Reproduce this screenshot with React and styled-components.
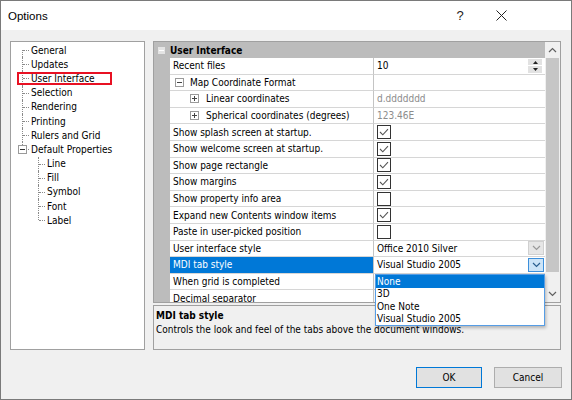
import React from "react";
import styled, { createGlobalStyle } from "styled-components";

const GlobalStyle = createGlobalStyle`
  html, body {
    margin: 0;
    padding: 0;
  }
  body {
    width: 572px;
    height: 400px;
    overflow: hidden;
    font-family: "DejaVu Sans Condensed", "DejaVu Sans", sans-serif;
    font-size: 10px;
    color: #000;
  }
`;

const Window = styled.div`
  width: 572px;
  height: 400px;
  box-sizing: border-box;
  border: 1px solid #7a7a7a;
  background: #f0f0f0;
  display: flex;
  flex-direction: column;
`;

const TitleBar = styled.div`
  height: 29px;
  flex-shrink: 0;
  background: #fff;
  display: flex;
  align-items: center;
  padding-left: 7px;
  font-family: "Liberation Sans", Arial, sans-serif;
  font-size: 11.5px;
`;

const TitleText = styled.div`
  flex: 1;
`;

const TitleButton = styled.div`
  width: ${(p) => p.w}px;
  height: 29px;
  display: flex;
  align-items: center;
  justify-content: center;
  font-size: 13px;
  color: #222;
`;

const Body = styled.div`
  display: flex;
  padding: 11px 10px 0 9px;
`;

const TreePanel = styled.div`
  width: 135px;
  height: 309px;
  box-sizing: border-box;
  border: 1px solid #a0a0a0;
  background: #fff;
  padding-top: 1px;
`;

const TreeRow = styled.div`
  position: relative;
  display: flex;
  align-items: center;
  height: 14.2px;
  padding-left: ${(p) => p.level * 16}px;
  white-space: nowrap;

  ${(p) =>
    p.marked &&
    `
    &::after {
      content: "";
      position: absolute;
      left: 6px;
      top: 1px;
      width: 95px;
      height: 13px;
      box-sizing: border-box;
      border: 2px solid #e81123;
    }
  `}
`;

const Guide = styled.span`
  position: relative;
  width: 18px;
  height: 14.2px;
  flex-shrink: 0;

  &::before {
    content: "";
    position: absolute;
    left: 11px;
    top: ${(p) => (p.first ? 7 : 0)}px;
    height: ${(p) => (p.first || p.last ? 7 : 14.2)}px;
    border-left: 1px dotted #8a8a8a;
  }
  &::after {
    content: "";
    position: absolute;
    left: 12px;
    top: 7px;
    width: 6px;
    border-top: 1px dotted #8a8a8a;
  }
`;

const TreeBox = styled.span`
  position: absolute;
  left: 7px;
  top: 3px;
  width: 9px;
  height: 9px;
  box-sizing: border-box;
  border: 1px solid #9a9a9a;
  background: #fff;
  z-index: 1;

  &::before {
    content: "";
    position: absolute;
    left: 1px;
    top: 3px;
    width: 5px;
    border-top: 1px solid #333;
  }
`;

const TreeLabel = styled.span`
  margin-left: 2px;
`;

const RightColumn = styled.div`
  position: relative;
  margin-left: 8px;
  width: 408px;
  display: flex;
  flex-direction: column;
  gap: 2px;
`;

const Grid = styled.div`
  height: 262px;
  box-sizing: border-box;
  border: 1px solid #a0a0a0;
  display: flex;
  background: #fff;
`;

const RowsArea = styled.div`
  flex: 1;
  overflow: hidden;
  display: flex;
  flex-direction: column;
`;

const CategoryRow = styled.div`
  height: 16px;
  flex-shrink: 0;
  display: flex;
  align-items: center;
  background: #bcbcbc;
  font-weight: bold;
`;

const CategoryToggle = styled.span`
  position: relative;
  width: 7px;
  height: 7px;
  margin: 0 5px 0 4px;
  background: #e4e4e4;

  &::before {
    content: "";
    position: absolute;
    left: 1px;
    top: 3px;
    width: 5px;
    border-top: 1px solid #fff;
  }
`;

const Row = styled.div`
  height: 16.6px;
  flex-shrink: 0;
  display: flex;
`;

const Margin = styled.div`
  width: 16px;
  flex-shrink: 0;
  background: #bcbcbc;
`;

const NameCell = styled.div`
  width: 203px;
  flex-shrink: 0;
  box-sizing: border-box;
  display: flex;
  align-items: center;
  padding-left: ${(p) => [3, 5, 20][p.indent || 0]}px;
  border-bottom: 1px solid #d6d6d6;
  background: ${(p) => (p.selected ? "#0078d7" : "#fff")};
  color: ${(p) => (p.selected ? "#fff" : "#000")};
  white-space: nowrap;
  overflow: hidden;
`;

const Expander = styled.span`
  position: relative;
  width: 9px;
  height: 9px;
  box-sizing: border-box;
  border: 1px solid #9a9a9a;
  margin-right: ${(p) => (p.plus ? 7 : 6)}px;
  flex-shrink: 0;

  &::before {
    content: "";
    position: absolute;
    left: 1px;
    top: 3px;
    width: 5px;
    border-top: 1px solid #444;
  }
  ${(p) =>
    p.plus &&
    `
    &::after {
      content: "";
      position: absolute;
      left: 3px;
      top: 1px;
      height: 5px;
      border-left: 1px solid #444;
    }
  `}
`;

const ValueCell = styled.div`
  flex: 1;
  min-width: 0;
  box-sizing: border-box;
  display: flex;
  align-items: center;
  justify-content: space-between;
  padding-left: 3px;
  padding-right: 1px;
  border-left: 1px solid #c4c4c4;
  border-bottom: 1px solid #d6d6d6;
  color: ${(p) => (p.muted ? "#8c8c8c" : "#000")};
  white-space: nowrap;
`;

const CheckBox = styled.span`
  width: 14px;
  height: 14px;
  box-sizing: border-box;
  border: 1px solid #333;
  background: #fff;
  display: flex;
  align-items: center;
  justify-content: center;
`;

const Spin = styled.span`
  width: 14px;
  height: 14px;
  margin-right: 2px;
  display: flex;
  flex-direction: column;
  gap: 1px;
`;

const SpinHalf = styled.span`
  flex: 1;
  background: #e2e2e2;
  display: flex;
  align-items: center;
  justify-content: center;
`;

const ComboButton = styled.span`
  width: 16px;
  height: 14px;
  box-sizing: border-box;
  border: 1px solid ${(p) => (p.active ? "#3c8fdb" : "#d0d0d0")};
  background: ${(p) => (p.active ? "#cce4f7" : "#e6e6e6")};
  display: flex;
  align-items: center;
  justify-content: center;
`;

const ScrollBar = styled.div`
  width: 15px;
  flex-shrink: 0;
  background: #f0f0f0;
  display: flex;
  flex-direction: column;
  align-items: center;
`;

const ScrollArrow = styled.div`
  height: ${(p) => p.h}px;
  width: 100%;
  display: flex;
  align-items: center;
  justify-content: center;
  flex-shrink: 0;
`;

const Thumb = styled.div`
  width: 13px;
  height: 214px;
  background: #c6c6c6;
  flex-shrink: 0;
`;

const Track = styled.div`
  flex: 1;
`;

const Description = styled.div`
  height: 45px;
  box-sizing: border-box;
  border: 1px solid #a0a0a0;
  padding: 4px 2px;
  display: flex;
  flex-direction: column;
  gap: 3px;
`;

const DescTitle = styled.div`
  font-weight: bold;
`;

const DropList = styled.div`
  position: absolute;
  left: 222px;
  top: 233px;
  width: 170px;
  box-sizing: border-box;
  border: 1px solid #569de5;
  background: #fff;
  box-shadow: 1px 2px 3px rgba(0, 0, 0, 0.25);
  z-index: 2;
`;

const DropItem = styled.div`
  height: 12.5px;
  display: flex;
  align-items: center;
  padding-left: 1px;
  background: ${(p) => (p.highlighted ? "#0078d7" : "#fff")};
  color: ${(p) => (p.highlighted ? "#fff" : "#000")};
`;

const Footer = styled.div`
  display: flex;
  justify-content: flex-end;
  gap: 12px;
  margin-top: 17px;
  padding-right: 9px;
`;

const Button = styled.button`
  width: ${(p) => p.w}px;
  height: 21px;
  box-sizing: border-box;
  border: 1px solid ${(p) => (p.primary ? "#0078d7" : "#adadad")};
  background: #e1e1e1;
  font-family: "DejaVu Sans Condensed", "DejaVu Sans", sans-serif;
  font-size: 10px;
  color: #000;
  padding: 0;
`;

const Chevron = ({ color = "#555", up }) => (
  <svg width="9" height="6" viewBox="0 0 9 6">
    <polyline
      points={up ? "1,5 4.5,1.5 8,5" : "1,1 4.5,4.5 8,1"}
      fill="none"
      stroke={color}
      strokeWidth="1.2"
    />
  </svg>
);

const Tri = ({ up }) => (
  <svg width="5" height="3" viewBox="0 0 5 3">
    <polygon points={up ? "0,3 2.5,0 5,3" : "0,0 2.5,3 5,0"} fill="#222" />
  </svg>
);

const treeItems = [
  { label: "General", level: 0, first: true },
  { label: "Updates", level: 0 },
  { label: "User Interface", level: 0, marked: true },
  { label: "Selection", level: 0 },
  { label: "Rendering", level: 0 },
  { label: "Printing", level: 0 },
  { label: "Rulers and Grid", level: 0 },
  { label: "Default Properties", level: 0, last: true, box: true },
  { label: "Line", level: 1 },
  { label: "Fill", level: 1 },
  { label: "Symbol", level: 1 },
  { label: "Font", level: 1 },
  { label: "Label", level: 1, last: true },
];

const rows = [
  { name: "Recent files", value: "10", kind: "spin" },
  { name: "Map Coordinate Format", indent: 1, expander: "minus" },
  { name: "Linear coordinates", indent: 2, expander: "plus", value: "d.ddddddd", muted: true },
  { name: "Spherical coordinates (degrees)", indent: 2, expander: "plus", value: "123.46E", muted: true },
  { name: "Show splash screen at startup.", kind: "check", checked: true },
  { name: "Show welcome screen at startup.", kind: "check", checked: true },
  { name: "Show page rectangle", kind: "check", checked: true },
  { name: "Show margins", kind: "check", checked: true },
  { name: "Show property info area", kind: "check", checked: false },
  { name: "Expand new Contents window items", kind: "check", checked: true },
  { name: "Paste in user-picked position", kind: "check", checked: false },
  { name: "User interface style", value: "Office 2010 Silver", kind: "combo" },
  { name: "MDI tab style", value: "Visual Studio 2005", kind: "combo", selected: true },
  { name: "When grid is completed" },
  { name: "Decimal separator" },
];

const tabStyles = ["None", "3D", "One Note", "Visual Studio 2005"];

function renderValue(row) {
  if (row.kind === "check") {
    return (
      <CheckBox>
        {row.checked && (
          <svg width="10" height="8" viewBox="0 0 10 8">
            <polyline points="1,4 3.8,6.8 9,1.2" fill="none" stroke="#555" strokeWidth="1.1" />
          </svg>
        )}
      </CheckBox>
    );
  }
  return (
    <>
      <span>{row.value}</span>
      {row.kind === "spin" && (
        <Spin>
          <SpinHalf>
            <Tri up />
          </SpinHalf>
          <SpinHalf>
            <Tri />
          </SpinHalf>
        </Spin>
      )}
      {row.kind === "combo" && (
        <ComboButton active={row.selected}>
          <Chevron color={row.selected ? "#2a5f8f" : "#999"} />
        </ComboButton>
      )}
    </>
  );
}

export default function App() {
  return (
    <Window>
      <GlobalStyle />
      <TitleBar>
        <TitleText>Options</TitleText>
        <TitleButton w={40}>?</TitleButton>
        <TitleButton w={42}>
          <svg width="11" height="11" viewBox="0 0 11 11">
            <path d="M0.5 0.5 L10.5 10.5 M10.5 0.5 L0.5 10.5" stroke="#222" strokeWidth="1" />
          </svg>
        </TitleButton>
        <TitleButton w={49} />
      </TitleBar>

      <Body>
        <TreePanel>
          {treeItems.map((item) => (
            <TreeRow key={item.label} level={item.level} marked={item.marked}>
              <Guide first={item.first} last={item.last}>
                {item.box && <TreeBox />}
              </Guide>
              <TreeLabel>{item.label}</TreeLabel>
            </TreeRow>
          ))}
        </TreePanel>

        <RightColumn>
          <Grid>
            <RowsArea>
              <CategoryRow>
                <CategoryToggle />
                User Interface
              </CategoryRow>
              {rows.map((row) => (
                <Row key={row.name}>
                  <Margin />
                  <NameCell indent={row.indent} selected={row.selected}>
                    {row.expander && <Expander plus={row.expander === "plus"} />}
                    {row.name}
                  </NameCell>
                  <ValueCell muted={row.muted}>{renderValue(row)}</ValueCell>
                </Row>
              ))}
            </RowsArea>
            <ScrollBar>
              <ScrollArrow h={16}>
                <Chevron up color="#606060" />
              </ScrollArrow>
              <Thumb />
              <Track />
              <ScrollArrow h={17}>
                <Chevron color="#606060" />
              </ScrollArrow>
            </ScrollBar>
          </Grid>

          <Description>
            <DescTitle>MDI tab style</DescTitle>
            <div>Controls the look and feel of the tabs above the document windows.</div>
          </Description>

          <DropList>
            {tabStyles.map((s, i) => (
              <DropItem key={s} highlighted={i === 0}>
                {s}
              </DropItem>
            ))}
          </DropList>
        </RightColumn>
      </Body>

      <Footer>
        <Button primary w={66}>
          OK
        </Button>
        <Button w={68}>Cancel</Button>
      </Footer>
    </Window>
  );
}
